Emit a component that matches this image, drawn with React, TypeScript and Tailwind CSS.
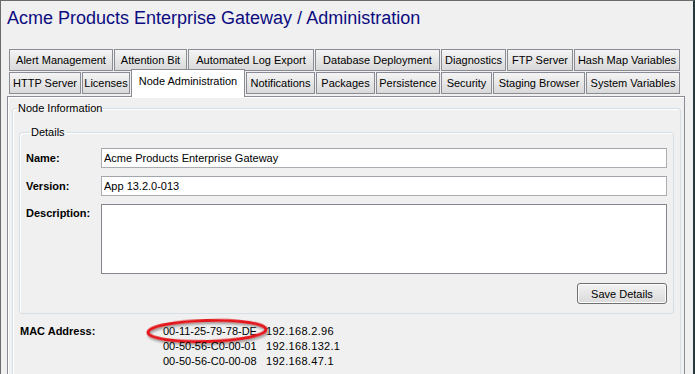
import React from 'react';

const ROW_ONE = [
  { label: 'Alert Management', w: 'w-[104px]' },
  { label: 'Attention Bit', w: 'w-[73px]' },
  { label: 'Automated Log Export', w: 'w-[126px]' },
  { label: 'Database Deployment', w: 'w-[125px]' },
  { label: 'Diagnostics', w: 'w-[65px]' },
  { label: 'FTP Server', w: 'w-[66px]' },
  { label: 'Hash Map Variables', w: 'w-[106px]' },
];

const ROW_TWO = [
  { label: 'HTTP Server', w: 'w-[72px]' },
  { label: 'Licenses', w: 'w-[48px]' },
  { label: 'Node Administration', w: 'w-[114px]', active: true },
  { label: 'Notifications', w: 'w-[69px]' },
  { label: 'Packages', w: 'w-[59px]' },
  { label: 'Persistence', w: 'w-[64px]' },
  { label: 'Security', w: 'w-[51px]' },
  { label: 'Staging Browser', w: 'w-[92px]' },
  { label: 'System Variables', w: 'w-[94px]' },
];

const ADDRESSES = [
  { mac: '00-11-25-79-78-DE', ip: '192.168.2.96' },
  { mac: '00-50-56-C0-00-01', ip: '192.168.132.1' },
  { mac: '00-50-56-C0-00-08', ip: '192.168.47.1' },
];

function Tab({ label, w, active }: { label: string; w: string; active?: boolean }) {
  if (active) {
    return (
      <div
        className={`${w} relative z-10 -mt-[3px] h-[28px] shrink-0 border border-b-0 border-[#898c95] bg-white pt-[4px] text-center leading-[14px]`}
      >
        {label}
      </div>
    );
  }
  return (
    <div
      className={`${w} h-[22px] shrink-0 border border-[#898c95] bg-linear-to-b from-[#f4f4f4] to-[#d9d9d9] pt-[3px] text-center leading-[14px]`}
    >
      {label}
    </div>
  );
}

function TextBox({ value }: { value: string }) {
  return (
    <input
      readOnly
      value={value}
      className="h-[20px] flex-1 border border-[#abadb3] border-t-[#a3a5ad] bg-white px-[2px] text-[11px] leading-[14px] text-black outline-none"
    />
  );
}

export default function App() {
  return (
    <div
      className="flex h-[374px] w-[695px] flex-col overflow-hidden border-t border-l border-[#6b6b6b] border-r-2 border-r-[#26393a] bg-[#f0f0f0] text-[11px] text-black"
      style={{ fontFamily: '"Liberation Sans", Arial, sans-serif' }}
    >
      {/* Page title */}
      <h1 className="pt-[6px] pl-[6px] text-[18px] leading-[22px] font-normal text-[#0c0c80]">
        Acme Products Enterprise Gateway / Administration
      </h1>

      {/* Tab strip */}
      <div className="mt-[20px] flex flex-col pl-[8px]">
        <div className="flex gap-[1px]">
          {ROW_ONE.map((t) => (
            <Tab key={t.label} {...t} />
          ))}
        </div>
        <div className="mt-[1px] flex h-[22px] items-start gap-[1px]">
          {ROW_TWO.map((t) => (
            <Tab key={t.label} {...t} />
          ))}
        </div>
      </div>

      {/* Tab panel */}
      <div className="mt-[2px] ml-[6px] w-[678px] flex-1 border border-[#898c95] shadow-[inset_1px_1px_0_#ffffff]">
        <fieldset className="mt-[4px] mr-[3px] ml-[4px] h-[400px] rounded-[3px] border border-[#d5dfe5] shadow-[inset_1px_1px_0_#ffffff]">
          <legend className="ml-[4px] px-[1px] leading-[14px]">Node Information</legend>

          <fieldset className="mt-[10px] mr-[6px] ml-[6px] rounded-[3px] border border-[#d5dfe5] px-[6px] pb-[9px] shadow-[inset_1px_1px_0_#ffffff]">
            <legend className="ml-[4px] px-[1px] leading-[14px]">Details</legend>

            <div className="mt-[9px] flex items-center">
              <span className="w-[75px] font-bold">Name:</span>
              <TextBox value="Acme Products Enterprise Gateway" />
            </div>
            <div className="mt-[8px] flex items-center">
              <span className="w-[75px] font-bold">Version:</span>
              <TextBox value="App 13.2.0-013" />
            </div>
            <div className="mt-[8px] flex items-start">
              <span className="w-[75px] pt-[1px] font-bold">Description:</span>
              <textarea
                readOnly
                className="h-[70px] flex-1 resize-none border border-[#828790] bg-white outline-none"
              />
            </div>
            <div className="mt-[9px] flex justify-end">
              <button className="h-[21px] w-[90px] rounded-[3px] border border-[#707070] bg-linear-to-b from-[#f2f2f2] to-[#dadada] leading-[14px] shadow-[inset_0_0_0_1px_#fcfcfc]">
                Save Details
              </button>
            </div>
          </fieldset>

          {/* MAC addresses */}
          <div className="mt-[10px] ml-[7px] flex">
            <span className="w-[143px] leading-[15px] font-bold">MAC Address:</span>
            <div className="flex flex-col">
              {ADDRESSES.map((a, i) => (
                <div key={a.mac} className="flex leading-[15px]">
                  <span className="relative w-[103px]">
                    {a.mac}
                    {i === 0 && (
                      <svg
                        className="pointer-events-none absolute -top-[6px] -left-[18px]"
                        width="126"
                        height="30"
                        viewBox="0 0 126 30"
                      >
                        <defs>
                          <filter id="ring-shadow" x="-10%" y="-30%" width="120%" height="170%">
                            <feDropShadow dx="1" dy="2" stdDeviation="1.3" floodColor="#555" floodOpacity="0.55" />
                          </filter>
                        </defs>
                        <ellipse
                          cx="62"
                          cy="13"
                          rx="59"
                          ry="10.5"
                          fill="none"
                          stroke="#e3141a"
                          strokeWidth="3"
                          transform="rotate(-1.5 62 13)"
                          filter="url(#ring-shadow)"
                        />
                      </svg>
                    )}
                  </span>
                  <span className="tracking-[0.3px]">{a.ip}</span>
                </div>
              ))}
            </div>
          </div>
        </fieldset>
      </div>
    </div>
  );
}
